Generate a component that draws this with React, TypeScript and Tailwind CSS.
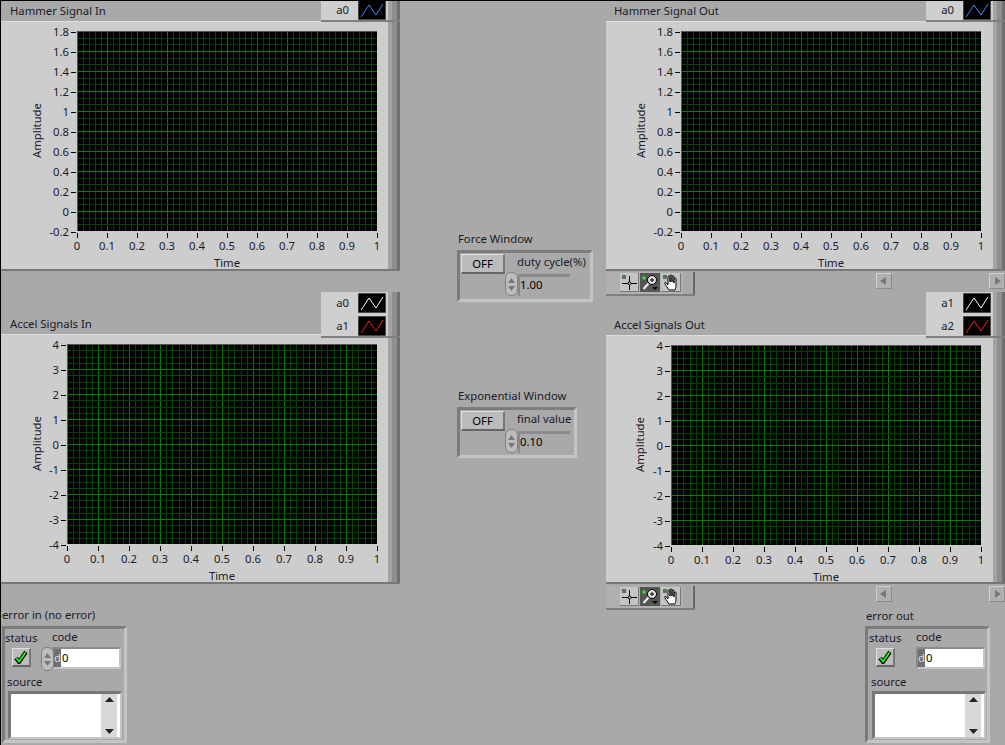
// @ts-nocheck
const font = "font-['Noto_Sans',sans-serif] text-[11.3px] leading-[14px] text-[#1a1a2a]";

const Bevel = () => (
  <div className="flex shrink-0 self-stretch">
    <div className="w-[4px] bg-[#a3a3a3]" />
    <div className="w-[5px] bg-[#8e8e8e]" />
    <div className="w-[3px] bg-[#6e6e6e]" />
  </div>
);

const Swatch = ({ color }) => (
  <svg width="28" height="20" className="block">
    <rect width="28" height="20" fill="#000" stroke="#8a8a8a" strokeWidth="1" />
    <polyline points="3,17 11,5 18,15 25,4" fill="none" stroke={color} strokeWidth="1" />
  </svg>
);

// legend box with plot names
const Legend = ({ items }) => (
  <div className="relative z-10 flex ml-auto w-[79px] bg-[#cfcfcf] border-b-2 border-[#7f7f7f] self-start">
    <div className="flex-1 pt-[1px] pr-[2px] flex flex-col gap-[3px]">
      {items.map((it) => (
        <div key={it.name} className="flex items-center justify-end gap-[9px]">
          <span className={font}>{it.name}</span>
          <Swatch color={it.color} />
        </div>
      ))}
    </div>
    <Bevel />
  </div>
);

const Plot = ({ w, h, hDiv, hMinor }) => {
  const lines = [];
  const total = 50;
  for (let i = 1; i < total; i++) {
    const x = Math.round((i * w) / total) + 0.5;
    lines.push(<line key={'v' + i} x1={x} x2={x} y1={0} y2={h} stroke={i % 5 === 0 ? '#007f00' : '#004400'} />);
  }
  const hTotal = hDiv * hMinor;
  for (let i = 1; i < hTotal; i++) {
    const y = Math.round((i * h) / hTotal) + 0.5;
    lines.push(<line key={'h' + i} x1={0} x2={w} y1={y} y2={y} stroke={i % hMinor === 0 ? '#007f00' : '#004400'} />);
  }
  return (
    <svg width={w} height={h} className="block shrink-0 bg-black">
      {lines}
      <path d={`M0.5 ${h}V0.5H${w}`} fill="none" stroke="#555" />
    </svg>
  );
};

const xTicks = ['0', '0.1', '0.2', '0.3', '0.4', '0.5', '0.6', '0.7', '0.8', '0.9', '1'];

// waveform graph panel
const Graph = ({ height, plotX, plotW, yTicks, hMinor, ampMl }) => (
  <div className="w-[399px] shrink-0 bg-[#cdcdcd] border-b-2 border-[#777] border-t border-t-[#dedede] flex" style={{ height }}>
    <div className="flex-1 flex pt-[9px]">
      <div className="flex items-start" style={{ width: plotX }}>
        <div className={font + ' [writing-mode:vertical-rl] rotate-180 h-[200px] text-center'} style={{ marginLeft: ampMl }}>Amplitude</div>
        <div className="flex-1 h-[214px] -mt-[6px] flex flex-col justify-between items-end pr-px">
          {yTicks.map((t) => (
            <div key={t} className="flex items-center gap-[2px] h-[14px]">
              <span className={font}>{t}</span>
              <span className="w-[5px] h-px bg-black" />
            </div>
          ))}
        </div>
      </div>
      <div className="flex flex-col items-center" style={{ width: plotW }}>
        <Plot w={plotW} h={200} hDiv={yTicks.length - 1} hMinor={hMinor} />
        <div className="flex shrink-0 justify-between -mx-[15px] self-stretch">
          {xTicks.map((t) => (
            <div key={t} className="flex flex-col items-center w-[30px]">
              <span className="w-px h-[5px] bg-black mt-[2px] mb-px" />
              <span className={font}>{t}</span>
            </div>
          ))}
        </div>
        <div className={font + ' shrink-0 mt-[3px]'}>Time</div>
      </div>
    </div>
    <Bevel />
  </div>
);

const Toolbar = () => (
  <div className="flex shrink-0 w-[89px] h-[24px] bg-[#b0b0b0] border-b-2 border-[#7f7f7f] pl-[14px] pt-[1px] gap-[1px]">
    <div className="w-[19px] h-[19px] bg-[#c4c4c4] border-r border-b border-[#777] relative">
      <span className="absolute left-[2px] top-[2px] w-[4px] h-[4px] bg-[#4d7a4d]" />
      <svg width="19" height="19" className="block">
        <path d="M9.500 3v14M2 10.500h15" stroke="#000" fill="none" />
        <circle cx="9.500" cy="10.500" r="1.500" fill="#ccc" stroke="#000" />
      </svg>
    </div>
    <div className="w-[20px] h-[19px] bg-[#555]">
      <svg width="20" height="19" className="block">
        <path d="M2 5h4M4 3v4" stroke="#38ff38" />
        <circle cx="12" cy="7" r="4.500" fill="#ddd" stroke="#000" />
        <path d="M10 7h4M12 5v4" stroke="#000" />
        <path d="M8.500 10.500L3.500 16" stroke="#eee" strokeWidth="2" />
        <path d="M12 14h6l-3 3z" fill="#000" />
      </svg>
    </div>
    <div className="w-[20px] h-[19px] bg-[#c4c4c4] border-r border-b border-[#777] relative">
      <span className="absolute left-[2px] top-[2px] w-[4px] h-[4px] bg-[#4d7a4d]" />
      <svg width="20" height="19" className="block">
        <path d="M8 17L4 11c-1-1.500.5-2.500 1.500-1l1.500 2V4c0-1.500 2-1.500 2 0v5V3c0-1.500 2-1.500 2 0v6V4c0-1.500 2-1.500 2 0v6V6c0-1.500 2-1.500 2 0v7c0 2-1 3-1 4z" fill="#fff" stroke="#000" />
      </svg>
    </div>
    <div className="w-[11px] h-[22px] -mt-px ml-[1px] bg-[#a8a8a8]" />
    <div className="w-[3px] h-[22px] -mt-px bg-[#666]" />
  </div>
);

const ScrollBtn = ({ flip, className }) => (
  <div className={'w-[16px] h-[16px] shrink-0 bg-[#b0b0b0] border border-[#8a8a8a] border-t-[#d0d0d0] border-l-[#d0d0d0] flex items-center justify-center ' + className}>
    <svg width="10" height="10" className={flip ? 'block -scale-x-100' : 'block'}>
      <path d="M1 5l6-4v8z" fill="#777" />
    </svg>
  </div>
);

const ToolRow = ({ className, btnTop }) => (
  <div className={'flex shrink-0 items-start relative z-10 ' + className}>
    <Toolbar />
    <ScrollBtn className={'ml-[181px] ' + btnTop} />
    <ScrollBtn flip className={'ml-[97px] ' + btnTop} />
  </div>
);

const Updown = () => (
  <div className="w-[13px] h-[24px] shrink-0 rounded-[6px] bg-[#bdbdbd] border border-[#808080] flex flex-col items-center justify-center gap-[3px]">
    <svg width="7" height="5" className="block"><path d="M3.500 0L7 5H0z" fill="#777" /></svg>
    <svg width="7" height="5" className="block"><path d="M3.500 5L7 0H0z" fill="#777" /></svg>
  </div>
);

const OffButton = () => (
  <div className={font + ' w-[44px] h-[20px] shrink-0 bg-[#bcbcbc] border-t border-l border-[#e0e0e0] border-r-2 border-b-2 border-r-[#777] border-b-[#666] flex items-center justify-center text-black'}>OFF</div>
);

// boolean window control with numeric
const WindowCluster = ({ label, caption, value, width, height }) => (
  <div className="flex flex-col gap-[4px]">
    <span className={font + ' pl-px'}>{label}</span>
    <div className="border-[3px] border-[#7c7c7c] border-r-[#c4c4c4] border-b-[#c4c4c4] pl-px pt-px" style={{ width, height }}>
      <div className="flex gap-[12px]">
        <OffButton />
        <span className={font + ' mt-px whitespace-nowrap'}>{caption}</span>
      </div>
      <div className="flex items-start gap-0 ml-[44px] -mt-[2px]">
        <Updown />
        <div className={font + ' w-[52px] h-[22px] mt-[2px] border-t-[3px] border-l-[2px] border-[#8a8a8a] text-black pt-px'}>{value}</div>
      </div>
    </div>
  </div>
);

const CheckBtn = () => (
  <div className="w-[19px] h-[19px] bg-[#bcbcbc] border-t border-l border-[#e0e0e0] border-r-2 border-b-2 border-r-[#777] border-b-[#666] flex items-center justify-center">
    <svg width="14" height="14" className="block">
      <path d="M2 8l3 4 7-10" fill="none" stroke="#000" strokeWidth="4" />
      <path d="M2.500 8l2.500 3.500 6.500-9" fill="none" stroke="#1bf01b" strokeWidth="2" />
    </svg>
  </div>
);

const ErrorCluster = ({ label, className, gap, isIn }) => (
  <div className={'flex flex-col shrink-0 ' + gap + ' ' + className}>
    <span className={font + (isIn ? '' : ' ml-px')}>{label}</span>
    <div className={'w-[125px] h-[117px] border-[3px] border-[#7c7c7c] border-r-[#c4c4c4] border-b-[#c4c4c4] ' + (isIn ? '' : 'pl-px')}>
      <div className="flex h-[42px] pt-px">
        <div className="w-[47px] shrink-0 flex flex-col">
          <span className={font + ' mt-px'}>status</span>
          <div className="ml-[7px] mt-[3px]"><CheckBtn /></div>
        </div>
        <div className="flex flex-col">
          <span className={font}>code</span>
          <div className="relative w-[69px] h-[22px] mt-[3px] border-[2px] border-[#8a8a8a] border-r-[#c4c4c4] border-b-[#c4c4c4] flex bg-white">
            {isIn && <div className="absolute -left-[13px] -top-[2px]"><Updown /></div>}
            <div className={font + ' w-[7px] bg-[#6f6f6f] text-[#ddd] flex items-center overflow-hidden'}>d</div>
            <span className={font + ' pl-px text-black leading-[18px]'}>0</span>
          </div>
        </div>
      </div>
      <div className={font + ' ml-[2px] mt-[4px]'}>source</div>
      <div className="ml-[3px] mt-[2px] w-[114px] h-[48px] border-t-[3px] border-l-[3px] border-[#777] border-r-2 border-b-2 border-r-[#c4c4c4] border-b-[#c4c4c4] flex justify-end bg-white pr-[3px]">
        <div className="w-[16px] bg-[#d8d8d8] flex flex-col justify-between items-center py-[3px]">
          <svg width="9" height="5" className="block"><path d="M4.500 0L9 5H0z" fill="#222" /></svg>
          <svg width="9" height="5" className="block"><path d="M4.500 5L9 0H0z" fill="#222" /></svg>
        </div>
      </div>
    </div>
  </div>
);

const blue = [{ name: 'a0', color: '#3a8cff' }];

const App = () => {
  const y1 = ['1.8', '1.6', '1.4', '1.2', '1', '0.8', '0.6', '0.4', '0.2', '0', '-0.2'];
  const y2 = ['4', '3', '2', '1', '0', '-1', '-2', '-3', '-4'];
  return (
    <div className="flex w-[1005px] h-[745px] bg-[#a9a9a9] overflow-hidden border-t border-l border-black">
      {/* left graphs */}
      <div className="flex flex-col w-[399px] shrink-0">
        <div className="flex shrink-0 items-end h-[20px] pl-[9px] pb-[3px]">
          <span className={font}>Hammer Signal In</span>
          <div className="ml-auto -mt-[2px] self-start h-0"><Legend items={blue} /></div>
        </div>
        <Graph height={250} plotX={76} plotW={300} yTicks={y1} hMinor={3} ampMl={29} />
        <div className="flex shrink-0 items-end h-[42px] mt-[21px] pl-[9px] pb-[3px]">
          <span className={font}>Accel Signals In</span>
          <div className="ml-auto self-start h-0"><Legend items={[{ name: 'a0', color: '#ffffff' }, { name: 'a1', color: '#ff2020' }]} /></div>
        </div>
        <Graph height={250} plotX={66} plotW={310} yTicks={y2} hMinor={4} ampMl={29} />
        <ErrorCluster label="error in (no error)" isIn gap="gap-[4px]" className="ml-px mt-[24px]" />
      </div>

      {/* window settings */}
      <div className="flex flex-col gap-[87px] w-[149px] ml-[57px] shrink-0 pt-[231px]">
        <WindowCluster label="Force Window" caption="duty cycle(%)" value="1.00" width={136} height={52} />
        <WindowCluster label="Exponential Window" caption="final value" value="0.10" width={120} height={51} />
      </div>

      {/* right graphs */}
      <div className="flex flex-col w-[399px] shrink-0">
        <div className="flex shrink-0 items-end h-[20px] pl-[8px] pb-[3px]">
          <span className={font}>Hammer Signal Out</span>
          <div className="ml-auto -mt-[2px] self-start h-0"><Legend items={blue} /></div>
        </div>
        <Graph height={250} plotX={75} plotW={300} yTicks={y1} hMinor={3} ampMl={28} />
        <ToolRow className="h-[20px] mt-px" btnTop="mt-px" />
        <div className="flex shrink-0 items-end h-[43px] pl-[8px] pb-[3px]">
          <span className={font}>Accel Signals Out</span>
          <div className="ml-auto self-start h-0"><Legend items={[{ name: 'a1', color: '#ffffff' }, { name: 'a2', color: '#ff2020' }]} /></div>
        </div>
        <Graph height={249} plotX={65} plotW={310} yTicks={y2} hMinor={4} ampMl={27} />
        <ToolRow className="h-[23px] mt-[2px]" btnTop="" />
        <ErrorCluster label="error out" gap="gap-[3px]" className="ml-[259px]" />
      </div>
    </div>
  );
};

export default App;
